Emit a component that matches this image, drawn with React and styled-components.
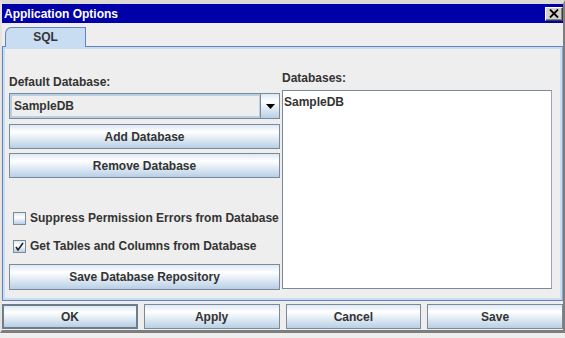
import React from 'react';
import styled, { createGlobalStyle } from 'styled-components';

const GlobalStyle = createGlobalStyle`
  html, body {
    margin: 0;
    padding: 0;
    background: #eeeeee;
  }
  * {
    box-sizing: border-box;
  }
`;

const Frame = styled.div`
  width: 565px;
  height: 333px;
  display: flex;
  flex-direction: column;
  background: #eeeeee;
  border-top: 4px solid #dcdad5;
  border-left: 2px solid #e6e4e0;
  border-right: 2px solid #7d7d7d;
  border-bottom: 3px solid #7d7d7d;
  box-shadow: inset 0 1px 0 #ffffff;
  font-family: 'Liberation Sans', Arial, sans-serif;
  font-weight: bold;
  font-size: 12px;
  color: #333333;
`;

const TitleBar = styled.div`
  height: 19px;
  flex: none;
  display: flex;
  align-items: center;
  justify-content: space-between;
  padding: 0 0 0 2px;
  background: #0000a8;
  color: #ffffff;
  font-size: 12px;
`;

const CloseButton = styled.div`
  width: 18px;
  height: 14px;
  display: flex;
  align-items: center;
  justify-content: center;
  background: #d4d0c8;
  border-top: 1px solid #ffffff;
  border-left: 1px solid #ffffff;
  border-right: 1px solid #404040;
  border-bottom: 1px solid #404040;
  box-shadow: inset -1px -1px 0 #808080;
`;

const TabStrip = styled.div`
  flex: none;
  height: 23px;
  display: flex;
  align-items: flex-end;
  padding-left: 3px;
`;

const Tab = styled.div`
  width: 81px;
  height: 20px;
  margin-bottom: -1px;
  display: flex;
  align-items: center;
  justify-content: center;
  padding-bottom: 2px;
  background: #c8ddf2;
  border: 1px solid #6382bf;
  border-bottom: none;
  border-top-left-radius: 6px 7px;
  position: relative;
  z-index: 1;
`;

const Panel = styled.div`
  flex: none;
  height: 255px;
  border: 1px solid #6382bf;
  border-right-color: #8aa3cf;
  box-shadow: inset 0 0 0 2px #c8ddf2;
  display: grid;
  grid-template-columns: 271px 270px;
  column-gap: 2px;
  padding: 0 0 0 6px;
`;

const Column = styled.div`
  display: flex;
  flex-direction: column;
  padding-top: ${(p) => p.$top}px;
`;

const Label = styled.div`
  line-height: 14px;
  height: 14px;
  white-space: nowrap;
`;

const Combo = styled.div`
  margin-top: 4px;
  height: 26px;
  display: flex;
  border: 1px solid #7a8a99;
  background: #eeeeee;
`;

const ComboValue = styled.div`
  flex: 1;
  display: flex;
  align-items: center;
  padding-left: 2px;
  border: 2px solid #b8cfe5;
  border-right-width: 1px;
  background: #eeeeee;
`;

const ComboArrow = styled.div`
  width: 19px;
  display: flex;
  align-items: center;
  justify-content: center;
  border-left: 1px solid #7a8a99;
  background: linear-gradient(to bottom, #dde8f3 0%, #ffffff 30%, #b8cfe5 100%);
`;

const Button = styled.div`
  height: ${(p) => p.$h || 25}px;
  margin-top: ${(p) => p.$mt || 0}px;
  display: flex;
  align-items: center;
  justify-content: center;
  white-space: nowrap;
  border: ${(p) => (p.$primary ? '2px solid #6d7d8c' : '1px solid #7a8a99')};
  background: linear-gradient(to bottom, #dde8f3 0%, #ffffff 30%, #b8cfe5 100%);
`;

const CheckRow = styled.div`
  height: 20px;
  margin-top: ${(p) => p.$mt}px;
  display: flex;
  align-items: center;
  gap: 4px;
  padding-left: 4px;
  white-space: nowrap;
`;

const CheckBox = styled.div`
  width: 13px;
  height: 13px;
  flex: none;
  display: flex;
  align-items: center;
  justify-content: center;
  border: 1px solid #7a8a99;
  background: linear-gradient(to bottom, #dde8f3 0%, #ffffff 40%, #b8cfe5 100%);
`;

const ListBox = styled.div`
  margin-top: 5px;
  height: 199px;
  background: #ffffff;
  border: 1px solid #7a8a99;
  border-right-color: #9aa6b2;
  padding: 4px 0 0 1px;
`;

const ListItem = styled.div`
  line-height: 14px;
`;

const ButtonRow = styled.div`
  flex: 1;
  display: grid;
  grid-template-columns: repeat(4, 1fr);
  column-gap: 6px;
  padding: 3px 0 1px 0;
`;

export default function App() {
  return (
    <>
      <GlobalStyle />
      <Frame>
        <TitleBar>
          <span>Application Options</span>
          <CloseButton>
            <svg width="10" height="9" viewBox="0 0 10 9">
              <path d="M1 0.5 L9 8.5 M9 0.5 L1 8.5" stroke="#000" strokeWidth="1.8" />
            </svg>
          </CloseButton>
        </TitleBar>
        <TabStrip>
          <Tab>SQL</Tab>
        </TabStrip>
        <Panel>
          <Column $top={28}>
            <Label>Default Database:</Label>
            <Combo>
              <ComboValue>SampleDB</ComboValue>
              <ComboArrow>
                <svg width="9" height="5" viewBox="0 0 9 5">
                  <path d="M0 0 H9 L4.5 5 Z" fill="#000" />
                </svg>
              </ComboArrow>
            </Combo>
            <Button $mt={5}>Add Database</Button>
            <Button $mt={4}>Remove Database</Button>
            <CheckRow $mt={30}>
              <CheckBox />
              Suppress Permission Errors from Database
            </CheckRow>
            <CheckRow $mt={8}>
              <CheckBox>
                <svg width="9" height="9" viewBox="0 0 9 9">
                  <path d="M1 5 L3 8 L8 1" stroke="#222" strokeWidth="1.6" fill="none" />
                </svg>
              </CheckBox>
              Get Tables and Columns from Database
            </CheckRow>
            <Button $mt={8} $h={26}>Save Database Repository</Button>
          </Column>
          <Column $top={24}>
            <Label>Databases:</Label>
            <ListBox>
              <ListItem>SampleDB</ListItem>
            </ListBox>
          </Column>
        </Panel>
        <ButtonRow>
          <Button $primary>OK</Button>
          <Button>Apply</Button>
          <Button>Cancel</Button>
          <Button>Save</Button>
        </ButtonRow>
      </Frame>
    </>
  );
}
